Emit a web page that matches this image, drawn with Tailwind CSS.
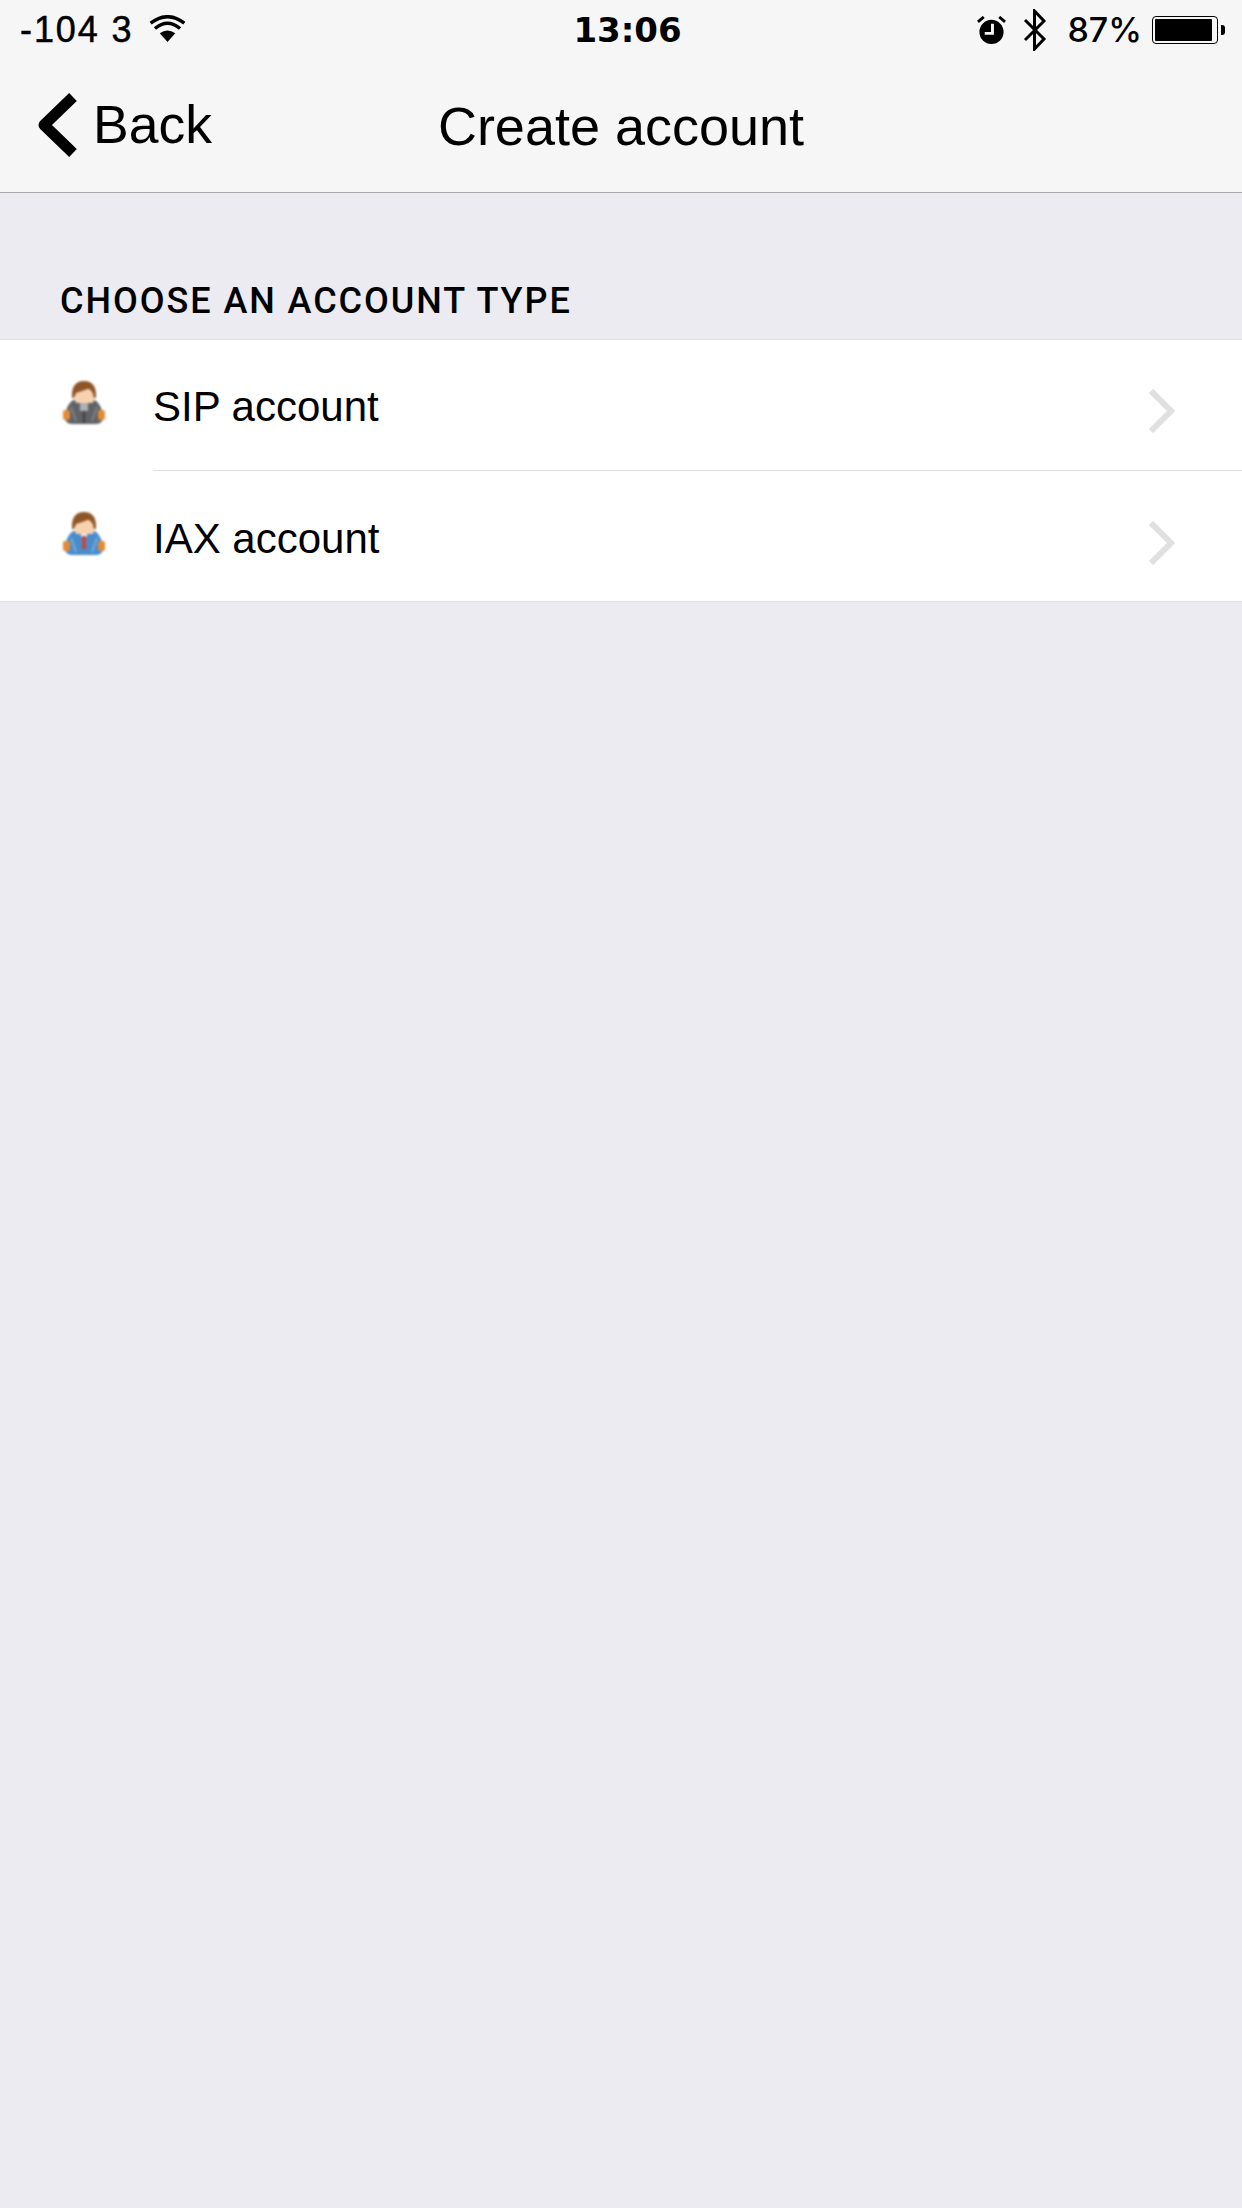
<!DOCTYPE html>
<html lang="en">
<head>
  <meta charset="UTF-8" />
  <meta name="viewport" content="width=device-width, initial-scale=1.0" />
  <title>Create account</title>
  <script src="https://cdn.jsdelivr.net/npm/@tailwindcss/browser@4"></script>
</head>
<body class="bg-[#ebebf1] min-h-screen font-['Liberation_Sans',sans-serif] text-black">
  <!-- status bar + nav -->
  <header class="bg-[#f6f6f6] h-[193px] border-b border-[#aaaaaa]">
    <div class="h-[60px] pl-[20px] pr-[17px] grid grid-cols-[1fr_auto_1fr] items-center">
      <div class="flex items-center">
        <span class="text-[36px] leading-none tracking-[1.9px] [-webkit-text-stroke:0.5px_black]">-104 3</span>
        <svg class="ml-[16px] mb-[4px]" width="37" height="27" viewBox="0 0 38 28">
          <path d="M19 28 L11 19 Q19 13 27 19 Z" fill="#000"/>
          <path d="M6 14 Q19 3 32 14" fill="none" stroke="#000" stroke-width="3.5"/>
          <path d="M1.5 8.5 Q19 -5 36.5 8.5" fill="none" stroke="#000" stroke-width="3.5"/>
        </svg>
      </div>
      <span class="ml-[10px] font-['DejaVu_Sans',sans-serif] font-bold text-[34px] leading-none">13:06</span>
      <div class="flex items-center justify-end">
        <svg width="29" height="29" viewBox="0 0 30 30">
          <circle cx="15" cy="16.5" r="12.5" fill="#000"/>
          <path d="M1 6 L7 1 M29 6 L23 1" stroke="#000" stroke-width="3"/>
          <path d="M16 8 V18 H8" fill="none" stroke="#f6f6f6" stroke-width="3"/>
        </svg>
        <svg class="ml-[17px]" width="24" height="42" viewBox="0 0 24 42">
          <path d="M2 11 L21 30 L11.5 40 V2 L21 12 L2 31" fill="none" stroke="#000" stroke-width="3"/>
        </svg>
        <span class="ml-[20px] font-['Inter',sans-serif] font-medium text-[34px] leading-none">87%</span>
        <div class="ml-[10px] w-[66px] h-[28px] border border-black rounded-[4px] p-[2px]">
          <div class="h-full w-[57px] bg-black rounded-[1px]"></div>
        </div>
        <div class="ml-[3px] w-[4px] h-[10px] bg-black rounded-r-[3px]"></div>
      </div>
    </div>
    <nav class="h-[132px] grid grid-cols-[1fr_auto_1fr] items-center">
      <div class="flex items-center pl-[38px]">
        <svg class="-mt-[2px]" width="42" height="66" viewBox="0 0 42 66">
          <path d="M35 5 L6 33 L35 61" fill="none" stroke="#000" stroke-width="11" stroke-linejoin="round"/>
        </svg>
        <span class="ml-[13px] text-[53.5px] leading-none -mt-[2px]">Back</span>
      </div>
      <h1 class="text-[54px] leading-none font-normal">Create account</h1>
      <div></div>
    </nav>
  </header>

  <h2 class="pt-[85px] pl-[60px] h-[146px] text-[36px] leading-[46px] font-['Roboto',sans-serif] font-medium tracking-[1.95px]">CHOOSE AN ACCOUNT TYPE</h2>

  <ul class="bg-white border-y border-[#e1e1e3]">
    <li class="h-[130px] flex items-center">
      <div class="w-[153px] pl-[62px] shrink-0">
        <svg class="blur-[1px] -mt-[6px]" width="44" height="43" viewBox="0 0 44 43">
          <path d="M11 19 H33 Q40 24 41 36 Q41 43 34 43 H10 Q3 43 3 36 Q4 24 11 19 Z" fill="#606266"/>
          <path d="M9 26 L14 40 M35 26 L30 40" stroke="#7b7d80" stroke-width="2.5"/>
          <rect x="18" y="21" width="8" height="9" fill="#aeb0b2"/>
          <rect x="20.5" y="30" width="3" height="12" fill="#46484c"/>
          <rect x="1" y="29" width="7" height="10" rx="2" fill="#e48b35"/>
          <rect x="36" y="29" width="7" height="10" rx="2" fill="#e48b35"/>
          <rect x="13" y="9" width="19" height="13" rx="3" fill="#f8d2ae"/>
          <path d="M10 17 Q9 0 22 0 Q35 0 34 17 L32 17 Q31 9 26 8 L14 12 L12 17 Z" fill="#8f5527"/>
        </svg>
      </div>
      <span class="text-[42px] leading-none mt-[3px]">SIP account</span>
      <svg class="ml-auto mr-[66px] mt-[12px]" width="28" height="44" viewBox="0 0 28 44">
        <path d="M3 2 L23 22 L3 42" fill="none" stroke="#e0e0e0" stroke-width="6"/>
      </svg>
    </li>
    <li class="ml-[153px] h-[1px] bg-[#dedee0]"></li>
    <li class="h-[130px] flex items-center">
      <div class="w-[153px] pl-[62px] shrink-0">
        <svg class="blur-[1px] -mt-[5px]" width="44" height="43" viewBox="0 0 44 43">
          <path d="M11 19 H33 Q40 24 41 36 Q41 43 34 43 H10 Q3 43 3 36 Q4 24 11 19 Z" fill="#4a8ccb"/>
          <path d="M9 26 L14 40 M35 26 L30 40" stroke="#6ea6da" stroke-width="2.5"/>
          <rect x="19" y="21" width="6" height="4" fill="#f2f2f2"/>
          <rect x="20" y="24" width="4" height="13" fill="#c8463e"/>
          <rect x="1" y="29" width="7" height="10" rx="2" fill="#e48b35"/>
          <rect x="36" y="29" width="7" height="10" rx="2" fill="#e48b35"/>
          <rect x="13" y="9" width="19" height="13" rx="3" fill="#f8d2ae"/>
          <path d="M10 17 Q9 0 22 0 Q35 0 34 17 L32 17 Q31 9 26 8 L14 12 L12 17 Z" fill="#8f5527"/>
        </svg>
      </div>
      <span class="text-[42px] leading-none mt-[5px]">IAX account</span>
      <svg class="ml-auto mr-[66px] mt-[14px]" width="28" height="44" viewBox="0 0 28 44">
        <path d="M3 2 L23 22 L3 42" fill="none" stroke="#e0e0e0" stroke-width="6"/>
      </svg>
    </li>
  </ul>
</body>
</html>
